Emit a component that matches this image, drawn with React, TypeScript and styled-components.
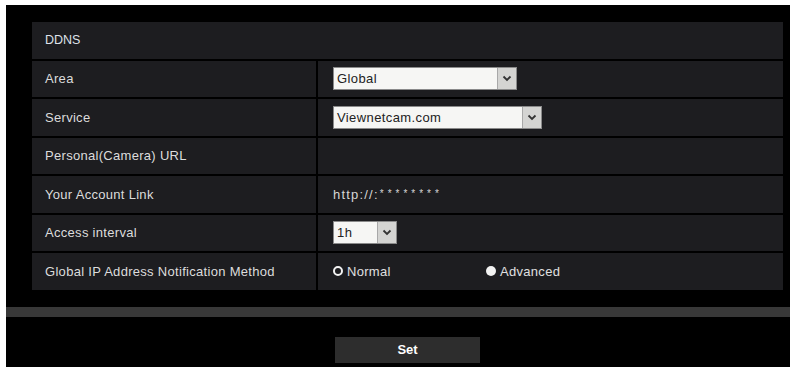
import styled, { createGlobalStyle } from "styled-components";

const ROWS = [
  { label: "Area", kind: "select", value: "Global", width: 184 },
  { label: "Service", kind: "select", value: "Viewnetcam.com", width: 209 },
  { label: "Personal(Camera) URL", kind: "empty" },
  { label: "Your Account Link", kind: "text", value: "http://:" },
  { label: "Access interval", kind: "select", value: "1h", width: 64 },
  { label: "Global IP Address Notification Method", kind: "radio" },
];

const GlobalStyle = createGlobalStyle`
  body {
    margin: 0;
    background: #fff;
    font-family: "Liberation Sans", Arial, sans-serif;
  }
`;

function Chevron() {
  return (
    <svg width="10" height="7" viewBox="0 0 10 7">
      <path d="M1.5 1.5 L5 5 L8.5 1.5" fill="none" stroke="#333" strokeWidth="1.8" />
    </svg>
  );
}

function Select({ value, width }: { value: string; width: number }) {
  return (
    <SelectBox style={{ width }}>
      <SelectText>{value}</SelectText>
      <SelectArrow>
        <Chevron />
      </SelectArrow>
    </SelectBox>
  );
}

export default function App() {
  return (
    <>
      <GlobalStyle />
      <Panel>
        <Table>
          <HeaderRow>DDNS</HeaderRow>
          {ROWS.map((row) => (
            <Row key={row.label}>
              <Label>{row.label}</Label>
              <Value>
                {row.kind === "select" && <Select value={row.value!} width={row.width!} />}
                {row.kind === "text" && (
                  <LinkText>
                    {row.value}
                    <Masked>********</Masked>
                  </LinkText>
                )}
                {row.kind === "radio" && (
                  <RadioGroup>
                    <RadioItem>
                      <RadioDot $checked={false} />
                      Normal
                    </RadioItem>
                    <RadioItem>
                      <RadioDot $checked />
                      Advanced
                    </RadioItem>
                  </RadioGroup>
                )}
              </Value>
            </Row>
          ))}
        </Table>
        <Divider />
        <Footer>
          <SetButton>Set</SetButton>
        </Footer>
      </Panel>
    </>
  );
}

const Panel = styled.div`
  margin: 5px 2px 0 6px;
  height: 362px;
  background: #000;
  box-sizing: border-box;
  padding-top: 17px;
  display: flex;
  flex-direction: column;
`;

const Table = styled.div`
  margin: 0 7px 0 26px;
  display: flex;
  flex-direction: column;
  gap: 2px;
`;

const HeaderRow = styled.div`
  height: 36.5px;
  display: flex;
  align-items: center;
  padding-left: 13px;
  background: #1d1d20;
  color: #dfe2ea;
  font-size: 12.5px;
`;

const Row = styled.div`
  height: 36.5px;
  display: grid;
  grid-template-columns: 284px 1fr;
  gap: 2px;
`;

const Label = styled.div`
  display: flex;
  align-items: center;
  padding-left: 13px;
  background: #1d1d20;
  color: #dcdcdc;
  font-size: 13px;
  letter-spacing: 0.3px;
`;

const Value = styled.div`
  display: flex;
  align-items: center;
  padding-left: 15px;
  background: #1d1d20;
  color: #dcdcdc;
  font-size: 13px;
`;

const SelectBox = styled.div`
  height: 23px;
  box-sizing: border-box;
  display: flex;
  background: #f6f6f4;
  border: 1px solid #8a8a8a;
`;

const SelectText = styled.div`
  flex: 1;
  display: flex;
  align-items: center;
  padding-left: 3px;
  color: #222;
  font-size: 13px;
  letter-spacing: 0.4px;
`;

const SelectArrow = styled.div`
  width: 18px;
  display: flex;
  align-items: center;
  justify-content: center;
  background: #d4d4d2;
  border-left: 1px solid #a8a8a8;
`;

const LinkText = styled.span`
  color: #d6d6d6;
  font-size: 13px;
  letter-spacing: 1.2px;
`;

const Masked = styled.span`
  margin-left: 1px;
  font-size: 10px;
  letter-spacing: 4px;
  vertical-align: 2px;
`;

const RadioGroup = styled.div`
  display: flex;
`;

const RadioItem = styled.div`
  width: 153px;
  display: flex;
  align-items: center;
  gap: 4px;
  color: #e0e0e0;
  font-size: 13px;
  letter-spacing: 0.3px;
`;

const RadioDot = styled.span<{ $checked: boolean }>`
  width: 10px;
  height: 10px;
  box-sizing: border-box;
  border-radius: 50%;
  background: ${(props) => (props.$checked ? "#f2f2f2" : "#1d1d20")};
  border: ${(props) => (props.$checked ? "none" : "2.5px solid #f2f2f2")};
`;

const Divider = styled.div`
  margin-top: 17px;
  height: 10px;
  background: #383838;
`;

const Footer = styled.div`
  margin: 20px 7px 0 26px;
  display: flex;
  justify-content: center;
`;

const SetButton = styled.div`
  width: 145px;
  height: 26px;
  display: flex;
  align-items: center;
  justify-content: center;
  background: #2d2d2d;
  color: #fff;
  font-size: 13px;
  font-weight: bold;
`;
